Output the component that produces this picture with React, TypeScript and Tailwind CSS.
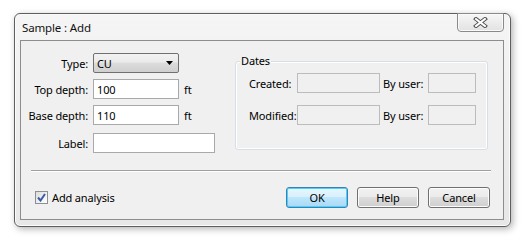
import React from 'react';

const btn =
  'w-[62px] h-[21px] rounded-[3px] border border-[#707070] bg-[linear-gradient(#f2f2f2_0%,#ebebeb_45%,#dddddd_50%,#cfcfcf_100%)] text-black shadow-[inset_0_0_0_1px_#fcfcfc] flex items-center justify-center';

const input = 'h-[20px] border border-[#a9a9a9] bg-white px-[3px] flex items-center';
const disabled = 'h-[20px] border border-[#bcbcbc] bg-[#f0f0f0]';

function CloseIcon() {
  return (
    <svg width="15" height="11" viewBox="0 0 15 11">
      <g strokeLinecap="square">
        <line x1="3" y1="2" x2="12" y2="9" stroke="#4b4b4b" strokeWidth="4" />
        <line x1="12" y1="2" x2="3" y2="9" stroke="#4b4b4b" strokeWidth="4" />
        <line x1="3" y1="2" x2="12" y2="9" stroke="#ffffff" strokeWidth="2" />
        <line x1="12" y1="2" x2="3" y2="9" stroke="#ffffff" strokeWidth="2" />
      </g>
    </svg>
  );
}

function CheckBox() {
  return (
    <div className="w-[13px] h-[13px] border border-[#8e8f8f] bg-[linear-gradient(135deg,#dcdcdc,#ffffff)] p-[1px]">
      <svg width="9" height="9" viewBox="0 0 9 9">
        <path d="M1 4.5 L3.5 7.5 L8 1" fill="none" stroke="#3b5aa6" strokeWidth="2" />
      </svg>
    </div>
  );
}

export default function App() {
  return (
    <div className="w-[525px] h-[240px] bg-white pt-[13px] pl-[14px] font-['Noto_Sans','DejaVu_Sans',sans-serif] text-[11px] leading-[15px] tracking-[-0.15px] text-black whitespace-nowrap">
      <div className="relative w-[497px] h-[214px] rounded-[6px] border border-[#5e5e5e] bg-[linear-gradient(#f5f5f5,#e7e7e7)] shadow-[2px_2px_7px_rgba(0,0,0,0.3),inset_0_0_0_1px_#fbfbfb] flex flex-col">
        <div className="h-[26px] pl-[7px] flex items-center text-[11.5px] text-[#111]">Sample : Add</div>
        <div className="absolute top-[-1px] right-[6px] w-[47px] h-[19px] rounded-b-[4px] border border-[#8a8a8a] bg-[linear-gradient(#f6f6f6,#e2e2e2)] shadow-[inset_0_0_0_1px_#fafafa] flex items-center justify-center">
          <CloseIcon />
        </div>

        <div className="ml-[5px] w-[484px] h-[180px] border border-[#8d8d8d] bg-[#f0f0f0] flex flex-col">
          <div className="flex">
            {/* left form */}
            <div className="w-[214px] pt-[12px] flex flex-col">
              <div className="flex items-center h-[20px]">
                <span className="w-[67px] text-right">Type:</span>
                <div className="ml-[5px] w-[86px] h-[20px] rounded-[2px] border border-[#707070] bg-[linear-gradient(#f2f2f2_0%,#ebebeb_45%,#dddddd_50%,#cfcfcf_100%)] flex items-center pl-[3px] pr-[5px]">
                  <span className="flex-1">CU</span>
                  <svg width="7" height="4" viewBox="0 0 7 4">
                    <path d="M0 0 H7 L3.5 4 Z" fill="#000" />
                  </svg>
                </div>
              </div>
              <div className="flex items-center h-[20px] mt-[6px]">
                <span className="w-[67px] text-right">Top depth:</span>
                <div className={`${input} ml-[5px] w-[86px]`}>100</div>
                <span className="ml-[5px]">ft</span>
              </div>
              <div className="flex items-center h-[20px] mt-[6px]">
                <span className="w-[67px] text-right">Base depth:</span>
                <div className={`${input} ml-[5px] w-[86px]`}>110</div>
                <span className="ml-[5px]">ft</span>
              </div>
              <div className="flex items-center h-[20px] mt-[8px]">
                <span className="w-[67px] text-right">Label:</span>
                <div className={`${input} ml-[5px] w-[122px]`} />
              </div>
            </div>

            {/* dates group */}
            <div className="relative mt-[20px] w-[253px] h-[89px] rounded-[3px] border border-[#d5dfe5] shadow-[inset_0_0_0_1px_#ffffff] pt-[11px] pl-[13px]">
              <span className="absolute left-[4px] top-[-9px] px-[1px] bg-[#f0f0f0]">Dates</span>
              <div className="flex items-center h-[20px]">
                <span className="w-[48px]">Created:</span>
                <div className={`${disabled} w-[83px]`} />
                <span className="ml-[3px] w-[45px]">By user:</span>
                <div className={`${disabled} w-[48px]`} />
              </div>
              <div className="flex items-center h-[20px] mt-[12px]">
                <span className="w-[48px]">Modified:</span>
                <div className={`${disabled} w-[83px]`} />
                <span className="ml-[3px] w-[45px]">By user:</span>
                <div className={`${disabled} w-[48px]`} />
              </div>
            </div>
          </div>

          <div className="ml-[10px] mt-[17px] w-[460px] border-t border-t-[#a0a0a0] border-b border-b-white" />

          <div className="mt-[15px] h-[21px] pl-[14px] pr-[13px] flex items-center">
            <CheckBox />
            <span className="ml-[4px]">Add analysis</span>
            <div className="ml-auto flex gap-[9px]">
              <div className={`${btn} !border-[#3c7fb1] !bg-[linear-gradient(#eaf6fd_0%,#d9f0fc_45%,#bee6fd_50%,#a7d9f5_100%)] !shadow-[inset_0_0_0_1px_#48d1ff]`}>OK</div>
              <div className={btn}>Help</div>
              <div className={btn}>Cancel</div>
            </div>
          </div>
        </div>
      </div>
    </div>
  );
}
